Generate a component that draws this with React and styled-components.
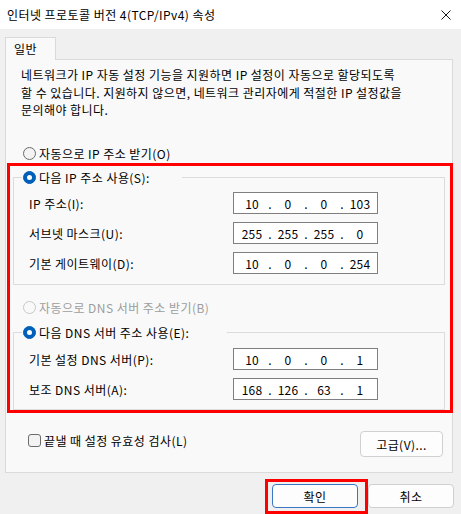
import React from "react";
import styled, { createGlobalStyle } from "styled-components";

const GlobalStyle = createGlobalStyle`
  html, body {
    margin: 0;
    padding: 0;
    background: #f0f0f0;
  }
  body {
    font-family: "Noto Sans CJK KR", "Noto Sans", sans-serif;
    font-size: 12px;
    letter-spacing: 0.45px;
    color: #000;
  }
  * { box-sizing: border-box; }
`;

const Window = styled.div`
  width: 461px;
  height: 514px;
  overflow: hidden;
  display: flex;
  flex-direction: column;
  background: #f0f0f0;
`;

const TitleBar = styled.div`
  height: 29px;
  flex: none;
  background: #ffffff;
  display: flex;
  align-items: center;
  justify-content: space-between;
  padding: 0 10px 0 7px;
`;

const Title = styled.span`
  font-size: 12px;
  line-height: 17px;
`;

const CloseIcon = () => (
  <svg width="10" height="10" viewBox="0 0 10 10" aria-hidden="true">
    <path d="M0.5 0.5 L9.5 9.5 M9.5 0.5 L0.5 9.5" stroke="#1a1a1a" strokeWidth="1" fill="none" />
  </svg>
);

const Body = styled.div`
  padding: 8px 0 0 5px;
  display: flex;
  flex-direction: column;
`;

const TabStrip = styled.div`
  display: flex;
`;

const Tab = styled.div`
  position: relative;
  z-index: 1;
  width: 51px;
  height: 23px;
  margin-bottom: -1px;
  padding-left: 8px;
  background: #f9f9f9;
  border: 1px solid #dadada;
  border-bottom: none;
  line-height: 21px;
`;

const Panel = styled.div`
  width: 448px;
  height: 414px;
  background: #f9f9f9;
  border: 1px solid #dadada;
  padding-top: 6px;
  display: flex;
  flex-direction: column;
`;

const Description = styled.p`
  margin: 0 0 25.5px 0;
  padding-left: 15px;
  line-height: 17.5px;
  white-space: nowrap;
`;

const Line = styled.span`
  display: block;
`;

const RadioRow = styled.label`
  display: flex;
  align-items: center;
  gap: 3px;
  height: ${(p) => p.$h || 18}px;
  padding-left: ${(p) => p.$indent || 0}px;
  margin-top: ${(p) => p.$top || 0}px;
  color: ${(p) => (p.$disabled ? "#9d9d9d" : "#000")};
  white-space: nowrap;
`;

const RadioCircle = styled.span`
  position: relative;
  flex: none;
  width: 13px;
  height: 13px;
  border-radius: 50%;
  border: 1px solid
    ${(p) => (p.$checked ? "#005fb8" : p.$disabled ? "#c8c8c8" : "#6b6b6b")};
  background: ${(p) => (p.$checked ? "#005fb8" : p.$disabled ? "#f9f9f9" : "#f3f3f3")};

  &::after {
    content: "";
    display: ${(p) => (p.$checked ? "block" : "none")};
    position: absolute;
    left: 3px;
    top: 3px;
    width: 5px;
    height: 5px;
    border-radius: 50%;
    background: #ffffff;
  }
`;

const Radio = ({ checked, disabled, children, ...rest }) => (
  <RadioRow $disabled={disabled} {...rest}>
    <RadioCircle $checked={checked} $disabled={disabled} />
    <span>{children}</span>
  </RadioRow>
);

const Highlight = styled.div`
  border: 3px solid #ff0000;
  margin: 1px -1px 0 1px;
  position: relative;
  z-index: 2;
  display: flex;
  flex-direction: column;
`;

const GroupBox = styled.fieldset`
  margin: ${(p) => p.$top}px 5px 0 3px;
  padding: 0;
  border: 1px solid #dcdcdc;
  min-inline-size: 0;
`;

const GroupLegend = styled.legend`
  margin-left: 8px;
  padding: 0 0 0 1px;
  width: ${(p) => p.$w}px;
  height: 17px;
  display: flex;
  align-items: center;
`;

const Rows = styled.div`
  display: grid;
  grid-template-columns: 1fr 145px;
  row-gap: 8px;
  align-items: center;
  padding: ${(p) => p.$pt}px 66px ${(p) => p.$pb}px 15px;
`;

const FieldLabel = styled.span`
  white-space: nowrap;
`;

const IpBox = styled.div`
  height: 22px;
  background: #ffffff;
  border: 1px solid #7f7f7f;
  display: flex;
  align-items: center;
  padding-left: 4px;
  letter-spacing: 0.2px;
`;

const Octet = styled.span`
  width: 28px;
  text-align: center;
`;

const Dot = styled.span`
  width: 8px;
  text-align: center;
`;

const IpField = ({ value }) => {
  const parts = value.split(".");
  return (
    <IpBox>
      {parts.map((p, i) => (
        <React.Fragment key={i}>
          {i > 0 && <Dot>.</Dot>}
          <Octet>{p}</Octet>
        </React.Fragment>
      ))}
    </IpBox>
  );
};

const OptionsRow = styled.div`
  display: flex;
  justify-content: space-between;
  align-items: flex-start;
  margin-top: 18px;
  padding: 0 9px 0 22px;
`;

const CheckRow = styled.label`
  display: flex;
  align-items: center;
  gap: 3px;
  height: 17px;
  margin-top: 0.5px;
`;

const CheckBox = styled.span`
  width: 13px;
  height: 13px;
  border: 1px solid #6b6b6b;
  border-radius: 3px;
  background: #f3f3f3;
  flex: none;
`;

const Button = styled.button`
  font-family: inherit;
  font-size: 12px;
  letter-spacing: inherit;
  color: #000;
  width: ${(p) => p.$w}px;
  height: ${(p) => p.$h}px;
  padding: 0;
  background: #fdfdfd;
  border: 1px solid ${(p) => (p.$default ? "#3b78c4" : "#d0d0d0")};
  border-radius: 4px;
  position: relative;
`;

const ButtonBar = styled.div`
  display: flex;
  justify-content: flex-end;
  gap: 10px;
  margin-top: 11px;
  padding-right: 7px;
`;

const Marked = styled.div`
  position: relative;
  display: flex;

  &::after {
    content: "";
    position: absolute;
    top: -5px;
    left: -7px;
    right: -10px;
    bottom: -6px;
    border: 3px solid #ff0000;
    pointer-events: none;
  }
`;

export default function App() {
  return (
    <>
      <GlobalStyle />
      <Window>
        <TitleBar>
          <Title>인터넷 프로토콜 버전 4(TCP/IPv4) 속성</Title>
          <CloseIcon />
        </TitleBar>
        <Body>
          <TabStrip>
            <Tab>일반</Tab>
          </TabStrip>
          <Panel>
            <Description>
              <Line>네트워크가 IP 자동 설정 기능을 지원하면 IP 설정이 자동으로 할당되도록</Line>
              <Line>할 수 있습니다. 지원하지 않으면, 네트워크 관리자에게 적절한 IP 설정값을</Line>
              <Line>문의해야 합니다.</Line>
            </Description>
            <Radio $indent={17}>자동으로 IP 주소 받기(O)</Radio>
            <Highlight>
              <GroupBox $top={3}>
                <GroupLegend $w={160}>
                  <Radio checked $h={17}>다음 IP 주소 사용(S):</Radio>
                </GroupLegend>
                <Rows $pt={6} $pb={10}>
                  <FieldLabel>IP 주소(I):</FieldLabel>
                  <IpField value="10.0.0.103" />
                  <FieldLabel>서브넷 마스크(U):</FieldLabel>
                  <IpField value="255.255.255.0" />
                  <FieldLabel>기본 게이트웨이(D):</FieldLabel>
                  <IpField value="10.0.0.254" />
                </Rows>
              </GroupBox>
              <Radio disabled $indent={13} $top={14} $h={17}>
                자동으로 DNS 서버 주소 받기(B)
              </Radio>
              <GroupBox $top={8}>
                <GroupLegend $w={205}>
                  <Radio checked $h={17}>다음 DNS 서버 주소 사용(E):</Radio>
                </GroupLegend>
                <Rows $pt={7} $pb={9}>
                  <FieldLabel>기본 설정 DNS 서버(P):</FieldLabel>
                  <IpField value="10.0.0.1" />
                  <FieldLabel>보조 DNS 서버(A):</FieldLabel>
                  <IpField value="168.126.63.1" />
                </Rows>
              </GroupBox>
            </Highlight>
            <OptionsRow>
              <CheckRow>
                <CheckBox />
                <span>끝낼 때 설정 유효성 검사(L)</span>
              </CheckRow>
              <Button $w={83} $h={26}>고급(V)...</Button>
            </OptionsRow>
          </Panel>
          <ButtonBar>
            <Marked>
              <Button $default $w={86} $h={24}>확인</Button>
            </Marked>
            <Button $w={86} $h={24}>취소</Button>
          </ButtonBar>
        </Body>
      </Window>
    </>
  );
}
